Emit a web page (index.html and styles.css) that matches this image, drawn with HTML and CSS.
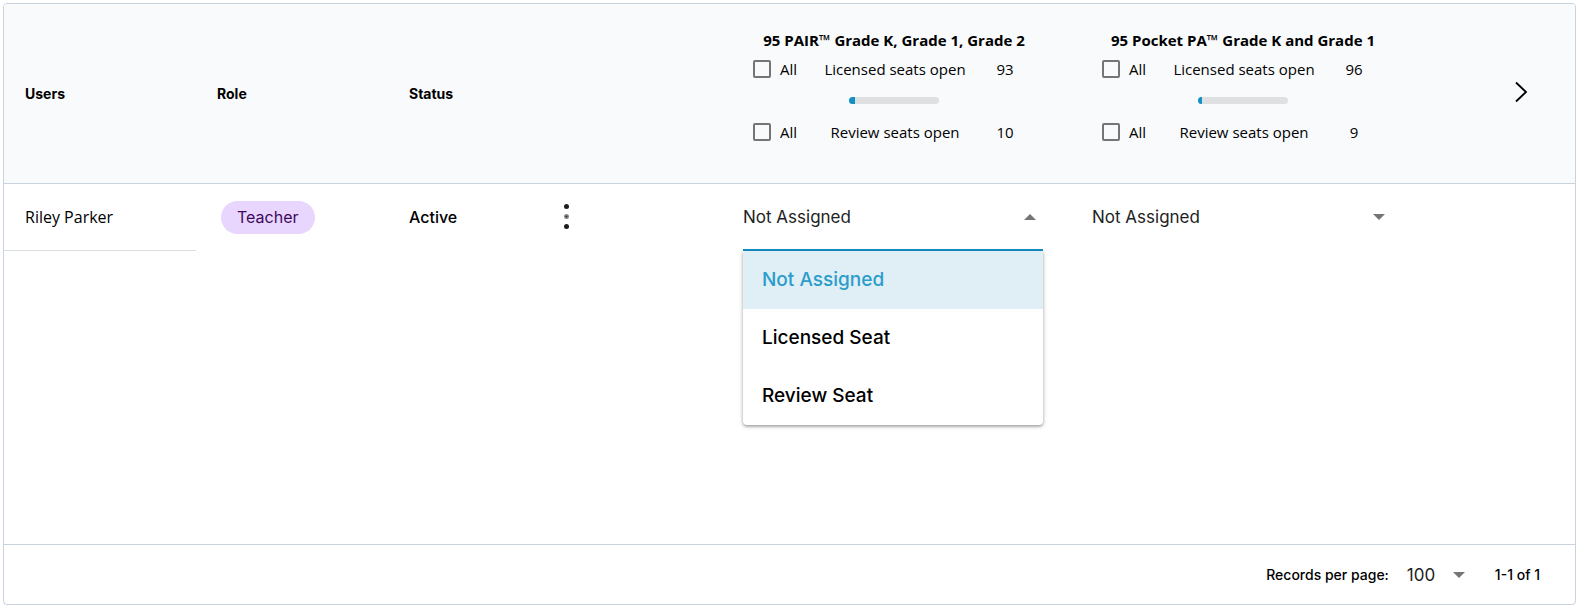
FILE: index.html
```html
<!DOCTYPE html>
<html lang="en">
<head>
    <meta charset="UTF-8">
    <meta name="viewport" content="width=device-width, initial-scale=1.0">
    <title>License Assignments</title>
    <link rel="stylesheet" href="styles.css">
</head>
<body>
    <div class="card">
        <table class="users-table">
            <colgroup>
                <col class="col-user">
                <col class="col-role">
                <col class="col-status">
                <col class="col-actions">
                <col class="col-product">
                <col class="col-product">
                <col class="col-next">
            </colgroup>
            <thead>
                <tr>
                    <th>Users</th>
                    <th>Role</th>
                    <th>Status</th>
                    <th></th>
                    <th class="product">
                        <div class="product-title">95 PAIR™ Grade K, Grade 1, Grade 2</div>
                        <div class="seats">
                            <label class="all"><input type="checkbox">All</label>
                            <span>Licensed seats open</span>
                            <span>93</span>
                        </div>
                        <div class="progress"><div class="progress-bar" style="width: 7%"></div></div>
                        <div class="seats">
                            <label class="all"><input type="checkbox">All</label>
                            <span>Review seats open</span>
                            <span>10</span>
                        </div>
                    </th>
                    <th class="product">
                        <div class="product-title">95 Pocket PA™ Grade K and Grade 1</div>
                        <div class="seats">
                            <label class="all"><input type="checkbox">All</label>
                            <span>Licensed seats open</span>
                            <span>96</span>
                        </div>
                        <div class="progress"><div class="progress-bar" style="width: 4%"></div></div>
                        <div class="seats">
                            <label class="all"><input type="checkbox">All</label>
                            <span>Review seats open</span>
                            <span>9</span>
                        </div>
                    </th>
                    <th class="next">
                        <button class="icon-button" aria-label="Next products">
                            <svg width="14" height="22" viewBox="0 0 14 22"><path d="M2 1.5 L12 11 L2 20.5" fill="none" stroke="#000" stroke-width="1.8"/></svg>
                        </button>
                    </th>
                </tr>
            </thead>
            <tbody>
                <tr>
                    <td class="user-name">Riley Parker</td>
                    <td><span class="badge">Teacher</span></td>
                    <td class="status">Active</td>
                    <td>
                        <button class="icon-button" aria-label="Actions">
                            <svg width="8" height="26" viewBox="0 0 8 26"><circle cx="3.5" cy="3.5" r="2.5" fill="#1d1d1d"/><circle cx="3.5" cy="13.5" r="2.5" fill="#888"/><circle cx="3.5" cy="13.5" r="1" fill="#333"/><circle cx="3.5" cy="23.5" r="2.5" fill="#1d1d1d"/></svg>
                        </button>
                    </td>
                    <td class="seat-cell">
                        <div class="select-box open">
                            <select aria-label="95 PAIR seat">
                                <option selected>Not Assigned</option>
                                <option>Licensed Seat</option>
                                <option>Review Seat</option>
                            </select>
                            <span class="arrow up"></span>
                            <div class="menu">
                                <button class="menu-item active">Not Assigned</button>
                                <button class="menu-item">Licensed Seat</button>
                                <button class="menu-item">Review Seat</button>
                            </div>
                        </div>
                    </td>
                    <td class="seat-cell">
                        <div class="select-box">
                            <select aria-label="95 Pocket PA seat">
                                <option selected>Not Assigned</option>
                                <option>Licensed Seat</option>
                                <option>Review Seat</option>
                            </select>
                            <span class="arrow"></span>
                        </div>
                    </td>
                    <td></td>
                </tr>
            </tbody>
        </table>

        <div class="footer">
            <label for="perPage">Records per page:</label>
            <div class="page-select">
                <select id="perPage">
                    <option>25</option>
                    <option>50</option>
                    <option selected>100</option>
                </select>
                <span class="arrow"></span>
            </div>
            <span>1-1 of 1</span>
        </div>
    </div>
</body>
</html>
```
FILE: styles.css
```css
* {
    box-sizing: border-box;
}
body {
    margin: 0;
    padding: 3px 4px 4px 3px;
    min-height: 100vh;
    display: flex;
    font-family: Inter, sans-serif;
    color: #000;
    background: #fff;
}
.card {
    flex: 1;
    display: flex;
    flex-direction: column;
    border: 1px solid #c9d3dd;
    border-radius: 4px;
}
.users-table {
    width: 100%;
    table-layout: fixed;
    border-collapse: separate;
    border-spacing: 0;
}
.col-user, .col-role {
    width: 192px;
}
.col-status {
    width: 154px;
}
.col-actions {
    width: 180px;
}
.col-product {
    width: 349px;
}
.col-next {
    width: 155px;
}
th {
    height: 180px;
    padding: 0 0 0 21px;
    text-align: left;
    font-size: 14px;
    font-weight: 700;
    background: #f9fafc;
    border-bottom: 1px solid #c9d3dd;
}
th:first-child {
    border-top-left-radius: 3px;
}
th:last-child {
    border-top-right-radius: 3px;
}
.product {
    padding: 26px 36px 0 31px;
    vertical-align: top;
    font-family: "Open Sans", sans-serif;
    font-size: 15px;
    line-height: 20px;
    font-weight: 400;
}
.product-title {
    text-align: center;
    font-weight: 700;
    white-space: nowrap;
}
.seats {
    display: grid;
    grid-template-columns: 62px 1fr 60px;
    margin-top: 9px;
    text-align: center;
}
.all {
    display: flex;
    align-items: center;
    gap: 9px;
}
.all input {
    appearance: none;
    width: 18px;
    height: 18px;
    margin: 0;
    border: 2px solid #757575;
    border-radius: 2px;
}
.progress {
    width: 90px;
    height: 7px;
    margin: 18px auto;
    border-radius: 4px;
    background: #dfe0e2;
    overflow: hidden;
}
.progress-bar {
    height: 100%;
    background: #1490c5;
}
.next {
    padding: 0;
    text-align: center;
}
.next .icon-button {
    margin-left: 46px;
}
.icon-button {
    padding: 0;
    border: none;
    background: none;
    cursor: pointer;
}
.icon-button svg {
    display: block;
}
td {
    height: 67px;
    padding: 0 0 0 21px;
    font-size: 16px;
}
.user-name {
    font-family: "Open Sans", sans-serif;
    font-size: 16px;
    border-bottom: 1px solid #dcdfe2;
}
.badge {
    display: inline-block;
    padding: 0 16px;
    margin-left: 4px;
    line-height: 33px;
    border-radius: 17px;
    color: #3c0a5c;
    background: #e8d6ff;
}
.status {
    padding-bottom: 2px;
    font-weight: 500;
}
.seat-cell {
    padding: 0 28px 0 21px;
}
.select-box {
    position: relative;
    display: flex;
    align-items: center;
    height: 67px;
    padding-right: 7px;
    border-bottom: 2px solid transparent;
}
.select-box.open {
    border-bottom-color: #1490c5;
}
select {
    appearance: none;
    flex: 1;
    padding: 0;
    border: none;
    background: none;
    font-family: Inter, sans-serif;
    font-size: 17px;
    line-height: 24px;
    color: #222;
}
.arrow {
    border: 6px solid transparent;
    border-top-color: #757575;
    border-bottom: none;
}
.arrow.up {
    border-top: none;
    border-bottom: 6px solid #757575;
}
.menu {
    position: absolute;
    top: 67px;
    left: 0;
    right: 0;
    background: #fff;
    border-radius: 0 0 4px 4px;
    box-shadow: 0 1px 4px rgba(0,0,0,0.3), 0 2px 2px rgba(0,0,0,0.15);
}
.menu-item {
    display: block;
    width: 100%;
    padding: 0 19px;
    border: none;
    background: none;
    text-align: left;
    font-family: Inter, sans-serif;
    font-size: 19px;
    font-weight: 500;
    line-height: 58px;
    color: #000;
    cursor: pointer;
}
.menu-item.active {
    color: #2b9dcb;
    background: #e0eef6;
}
.footer {
    display: flex;
    justify-content: flex-end;
    align-items: center;
    height: 60px;
    margin-top: auto;
    padding-right: 35px;
    border-top: 1px solid #c9d3dd;
    font-size: 14px;
    font-weight: 500;
}
.page-select {
    display: flex;
    align-items: center;
    width: 58px;
    margin: 0 30px 0 18px;
}
```
